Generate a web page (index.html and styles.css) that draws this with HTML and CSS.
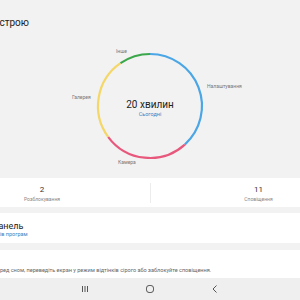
FILE: index.html
```html
<!DOCTYPE html>
<html lang="uk">
<head>
<meta charset="utf-8">
<link rel="stylesheet" href="styles.css">
</head>
<body>
<div class="screen">
  <div class="header"><span class="title">Використання пристрою</span></div>
  <div class="chart">
    <svg class="ring" width="300" height="135" viewBox="0 0 300 135">
      <g fill="none" stroke-width="2.2">
        <path d="M150 16 A52 52 0 0 1 184.8 106.6" stroke="#4ba6e6"/>
        <path d="M184.8 106.6 A52 52 0 0 1 108.1 98.8" stroke="#e8587c"/>
        <path d="M108.1 98.8 A52 52 0 0 1 120.5 25.2" stroke="#f4d767"/>
        <path d="M120.5 25.2 A52 52 0 0 1 150 16" stroke="#3aa74a"/>
      </g>
    </svg>
    <span class="lbl l-other">Інше</span>
    <span class="lbl l-gallery">Галерея</span>
    <span class="lbl l-settings">Налаштування</span>
    <span class="lbl l-camera">Камера</span>
    <div class="center">
      <div class="total">20 хвилин</div>
      <div class="today">Сьогодні</div>
    </div>
  </div>
  <div class="stats">
    <div class="stat"><div class="num">2</div><div class="cap">Розблокування</div></div>
    <div class="stat"><div class="num">11</div><div class="cap">Сповіщення</div></div>
  </div>
  <div class="panel">
    <div class="panel-title">Панель</div>
    <div class="panel-sub">Таймери додатків програм</div>
  </div>
  <div class="tip">
    <div class="tip-text">Щоб краще відпочити перед сном, переведіть екран у режим відтінків сірого або заблокуйте сповіщення.</div>
  </div>
  <div class="nav">
    <svg width="12" height="12" viewBox="0 0 12 12"><g stroke="#555" stroke-width="1"><line x1="3.5" y1="3" x2="3.5" y2="9"/><line x1="6" y1="3" x2="6" y2="9"/><line x1="8.5" y1="3" x2="8.5" y2="9"/></g></svg>
    <svg width="12" height="12" viewBox="0 0 12 12"><rect x="2.5" y="2.5" width="7" height="7" rx="2.6" fill="none" stroke="#555" stroke-width="1"/></svg>
    <svg width="12" height="12" viewBox="0 0 12 12"><path d="M7.5 2.5 L4 6 L7.5 9.5" fill="none" stroke="#555" stroke-width="1"/></svg>
  </div>
</div>
</body>
</html>
```
FILE: styles.css
```css
html, body {
  margin: 0;
  padding: 0;
}
body {
  width: 300px;
  height: 300px;
  overflow: hidden;
  background: #f2f2f2;
  font-family: Roboto, "Noto Sans", sans-serif;
  color: #222;
}
.screen {
  width: 300px;
  height: 300px;
  display: flex;
  flex-direction: column;
  overflow: hidden;
}
.header {
  height: 38px;
  padding-top: 17px;
  box-sizing: border-box;
  white-space: nowrap;
}
.title {
  display: block;
  font-size: 10px;
  margin-left: -87px;
  line-height: 12px;
}
.chart {
  position: relative;
  height: 135px;
}
.ring {
  position: absolute;
  left: 0;
  top: 0;
}
.lbl {
  position: absolute;
  font-size: 5px;
  color: #777;
  white-space: nowrap;
  line-height: 6px;
}
.l-other { left: 116px; top: 10px; }
.l-gallery { left: 72px; top: 56px; }
.l-settings { left: 207px; top: 45px; }
.l-camera { left: 118px; top: 121px; }
.center {
  position: absolute;
  left: 100px;
  top: 60px;
  width: 100px;
  text-align: center;
}
.total {
  font-size: 10px;
  line-height: 13px;
  color: #222;
}
.today {
  font-size: 5.5px;
  line-height: 7px;
  color: #3b82c4;
}
.stats {
  margin-top: 5px;
  margin-left: -66px;
  width: 432px;
  height: 29px;
  background: #fff;
  display: grid;
  grid-template-columns: 1fr 1fr;
  align-items: center;
}
.stat {
  text-align: center;
}
.stat + .stat {
  border-left: 1px solid #ececec;
}
.num {
  font-size: 8px;
  line-height: 10px;
  margin-top: 2px;
  color: #333;
}
.cap {
  font-size: 5px;
  line-height: 8px;
  color: #888;
}
.panel {
  margin-top: 6px;
  height: 30px;
  background: #fff;
  padding-top: 8px;
  box-sizing: border-box;
  white-space: nowrap;
}
.panel-title {
  font-size: 9px;
  line-height: 10px;
  margin-left: -8px;
  color: #222;
}
.panel-sub {
  font-size: 5.5px;
  line-height: 7px;
  color: #3b82c4;
  margin-left: -42px;
}
.tip {
  margin-top: 7px;
  height: 28px;
  background: #fff;
  padding-top: 17px;
  box-sizing: border-box;
  white-space: nowrap;
}
.tip-text {
  font-size: 5.55px;
  line-height: 6px;
  color: #666;
  margin-left: -65px;
}
.nav {
  flex: 1;
  background: #efefef;
  display: flex;
  justify-content: center;
  align-items: center;
  gap: 53px;
}
.nav svg {
  display: block;
}
```
